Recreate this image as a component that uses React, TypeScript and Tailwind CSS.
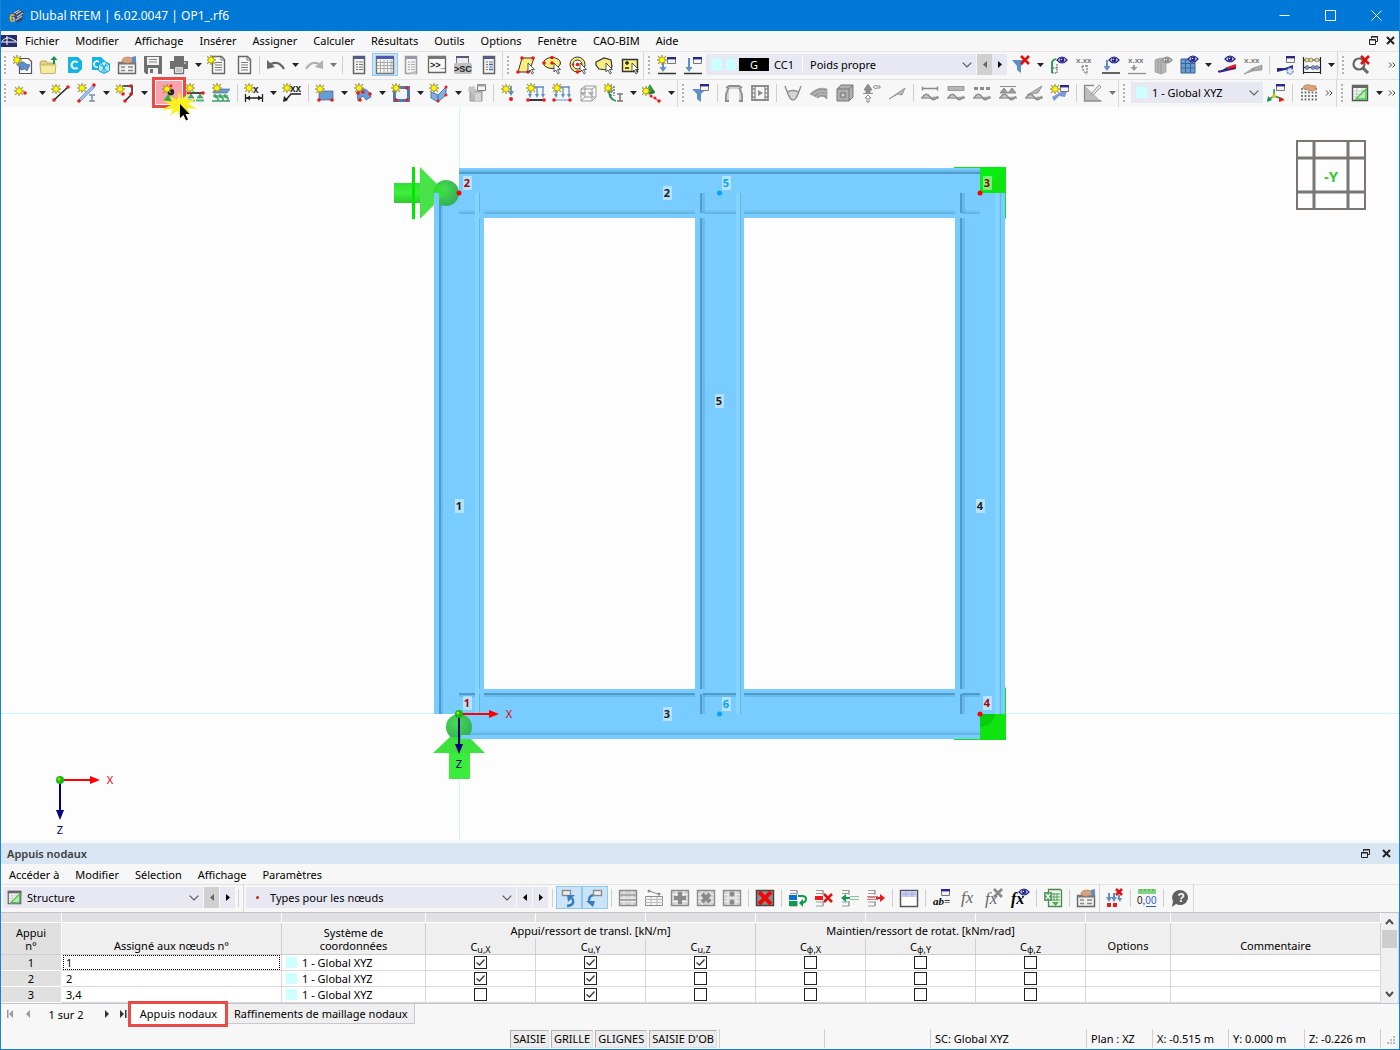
import { type ReactNode } from 'react'

const RED = '#f01818'
const STEEL = '#5f8fca'
const NAVY = '#28288c'
const GRAY = '#8c8c8c'
const DARK = '#555555'

/* ---------- small parts shared by the toolbar icons ---------- */

function Star({ x = 5, y = 5 }: { x?: number; y?: number }) {
    return (
        <g transform={`translate(${x} ${y})`}>
            <path d="M0-5 1-2 4-4 2.2-1 5 0 2.2 1 4 4 1 2 0 5-1 2-4 4-2.2 1-5 0-2.2-1-4-4-1-2z" fill="#f8e800" stroke="#8a8440" strokeWidth=".6" />
            <circle r="2" fill="#fff600" />
        </g>
    )
}

function Dot({ x, y, r = 1.8 }: { x: number; y: number; r?: number }) {
    return <circle cx={x} cy={y} r={r} fill={RED} />
}

function Eye({ x = 14, y = 5, c = NAVY }: { x?: number; y?: number; c?: string }) {
    return (
        <g transform={`translate(${x} ${y})`}>
            <path d="M-5 0Q0-6 5 0 0 6-5 0z" fill="#dfe3f4" stroke={c} strokeWidth="1.2" />
            <circle r="2.4" fill={c} />
            <circle cx="-.6" cy="-.6" r=".7" fill="#fff" />
        </g>
    )
}

function Win({ x = 11, y = 1, c = NAVY }: { x?: number; y?: number; c?: string }) {
    return (
        <g transform={`translate(${x} ${y})`}>
            <path d="M.5.5h8v6h-8z" fill="#f4f4f4" stroke="#777" />
            <path d="M0 0h9v2.4H0z" fill={c} />
        </g>
    )
}

function Mini({ x, y, s = 6, c = DARK, children }: { x: number; y: number; s?: number; c?: string; children: string }) {
    return (
        <text x={x} y={y} fontSize={s} fill={c} fontWeight="700" fontFamily="Liberation Sans, sans-serif">{children}</text>
    )
}

const page = (
    <>
        <path d="M5.5 1.5h9l3 3v14h-12z" fill="#fafafa" stroke="#666" strokeWidth="1.4" />
        <path d="M14 1.500v3.500h3.500M8 7.500h7M8 10h7M8 12.500h7M8 15h7" fill="none" stroke="#777" />
    </>
)

const form = (
    <>
        <path d="M1.500 7.500h17v11h-17z" fill="#f0f0f0" stroke="#666" strokeWidth="1.400" />
        <path d="M1 7h18v2.500H1z" fill="#777" />
        <path d="M4 12h4M4 15.500h4M11 12h5M11 15.500h5" stroke="#888" strokeWidth="1.400" />
        <path d="M5 6c0-3 3-4 6-4l6 1v4l-5 1c-3 .5-6 0-7-2z" fill="#d9a27c" stroke="#a87858" strokeWidth=".6" />
        <path d="M15 2l4-1v6l-4 1z" fill={STEEL} />
    </>
)

const funnel = <path d="M1 5h14l-5 6v7l-4-3v-4z" fill={STEEL} />

const panel = (
    <>
        <path d="M4.500 1.500h11v17h-11z" fill="#f4f4f4" stroke="#666" strokeWidth="1.500" />
        <path d="M4 1h12v3H4z" fill="#555a80" />
        <path d="M7 7h2M7 9.500h2M7 12h2M7 14.500h2M10 7h4M10 9.500h4M10 12h4M10 14.500h4" stroke="#777" />
    </>
)

const frameLoad = (c: string, a: string) => (
    <>
        <path d="M3 4h15M4 4v9M11 4v9M17 4v9" stroke={a} strokeWidth="1.300" />
        <path d="M2 11h4l-2 4zM9 11h4l-2 4zM15 11h4l-2 4z" fill={a} />
        <path d="M2 17h16" stroke={c} strokeWidth="1.800" />
    </>
)

const wave = (
    <>
        <path d="M2 15q4-7 8-1t8-1" fill="#c8c8c8" stroke={GRAY} strokeWidth="1.500" />
        <path d="M1 15h18" stroke={GRAY} strokeWidth="1.300" />
    </>
)

const cells = (inner: ReactNode) => (
    <>
        <path d="M1.500 2.500h17v15h-17z" fill="#d2d2d2" stroke={GRAY} strokeWidth="1.400" />
        <path d="M2 6.500h16M2 10h16M2 13.500h16M6 3v14M14 3v14" stroke="#efefef" />
        {inner}
    </>
)

const rows = (
    <path d="M2 2.500h7v3H2M2 9.500h7M2 14h7v4H2M9 2v5M9 13v5" fill="none" stroke="#999" />
)

const redX = (x: number, y: number, s = 4, c = '#e01010') => (
    <path d={`M${x - s} ${y - s}l${2 * s} ${2 * s}m0-${2 * s}l-${2 * s} ${2 * s}`} stroke={c} strokeWidth="2.600" />
)

const pointer = <path d="M12 8v9l2-2 2 4 1.500-1-2-3.500h3z" fill="#fff" stroke="#333" strokeWidth=".8" />

const icons: Record<string, ReactNode> = {
    'new model': <><path d="M6.500 3.500h9l3 3v12h-12z" fill="#fff" stroke="#555" strokeWidth="1.200" /><path d="M4 10q5-6 9-1l4 1-3 6-2-2-4 1-1-3z" fill={STEEL} stroke="#365f94" strokeWidth=".7" /><Star x={4} y={5} /></>,
    'open': <><path d="M1 8l1-2h5l1 2h8v10H2z" fill="#e3d27a" stroke="#a89440" strokeWidth=".7" /><path d="M1 10h16l-1 8.500H2z" fill="#f5ec9f" stroke="#b5a452" strokeWidth=".7" /><path d="M14 9V5h-2.500L15 1l3.500 4H16v4z" fill="#18944a" /></>,
    'cloud center': <><path d="M3 2h10l4 4v8l-4 4H3z" fill="#12b5e6" /><path d="M12.500 7.500a3.500 3.500 0 1 0 0 5" fill="none" stroke="#fff" strokeWidth="2" /></>,
    'cloud network': <><path d="M1 2h9l4 4v9H1z" fill="#12b5e6" /><path d="M8 7a3 3 0 1 0-1 5" fill="none" stroke="#fff" strokeWidth="1.500" /><path d="M13 6l5.500 3v6.500L13 18.500l-5.500-3V9z" fill="#b5ebfa" stroke="#12a5d6" /><path d="M7.500 9l5.500 3 5.500-3M13 12v6.500M10 7.500l6 10M16 7.500l-6 10" fill="none" stroke="#12a5d6" strokeWidth=".9" /></>,
    'model data': form,
    'save': <><path d="M1 1h18v18H3l-2-2z" fill="#707070" /><path d="M4 2h12v8H4zM5 13h10v6H5z" fill="#f2f2f2" /><path d="M6 4.500h8M6 7h8" stroke="#888" /><path d="M7 14h3v4H7z" fill="#707070" /></>,
    'print': <><path d="M5 1h10v5H5zM1 6h18v8H1z" fill="#707070" /><path d="M5.500 11.500h9v7h-9z" fill="#fff" stroke="#707070" strokeWidth="1.400" /><path d="M7 14h6M7 16h6" stroke="#888" /><path d="M15 8h2" stroke="#fff" /></>,
    'new report': <>{page}<Star x={4} y={5} /></>,
    'report': page,
    'undo': <><path d="M5 9q8-4 13 5" fill="none" stroke="#666" strokeWidth="2.200" /><path d="M1 5v9l8-2z" fill="#666" /></>,
    'redo': <><path d="M15 9Q7 5 2 14" fill="none" stroke="#b0b0b0" strokeWidth="2.200" /><path d="M19 5v9l-8-2z" fill="#b0b0b0" /></>,
    'navigator': panel,
    'tables': <><path d="M1.500 1.500h17v17h-17z" fill="#f8f8f8" stroke="#777" strokeWidth="1.400" /><path d="M1 1h18v3H1z" fill="#4a5ab0" /><path d="M2 7.500h16M2 10.500h16M2 13.500h16M5.500 5v13M9 5v13M12.500 5v13M16 5v13" stroke="#aaa" /></>,
    'scripts': <g opacity=".6">{panel}<path d="M9 17l6-1v3H9z" fill="#999" /></g>,
    'console': <><path d="M1.500 1.500h17v16h-17z" fill="#f8f8f8" stroke="#666" strokeWidth="1.300" /><path d="M1 1h18v3H1z" fill="#777" /><Mini x={3} y={13} s={9} c="#222">{'>>_'}</Mini></>,
    'script manager': <><path d="M3.500 1.500h12v8h-12z" fill="#eee" stroke="#777" /><path d="M3 1h13v2H3z" fill="#555a80" /><rect x="1" y="8" width="18" height="11" rx="2" fill="#c0c0c0" /><Mini x={1} y={17} s={9} c="#222">{'>SC'}</Mini></>,
    'plausibility': <>{panel}<path d="M10 9.500h4M10 14.500h4" stroke="#3a66c8" strokeWidth="1.400" /></>,
    'select rhombus': <><path d="M6 3h12l-5 14H2z" fill="#f8ee80" stroke="#333" /><Dot x={6} y={3} /><Dot x={17} y={3} /><Dot x={2} y={17} /><Dot x={12} y={17} />{pointer}</>,
    'select ellipse': <><ellipse cx="10" cy="8" rx="8.500" ry="5.500" fill="#f8ee80" stroke="#333" /><Dot x={10} y={8} /><Dot x={10} y={2.5} /><Dot x={2} y={8} />{pointer}</>,
    'select ring': <><circle cx="9.500" cy="9.500" r="7.500" fill="#f8ee80" stroke="#333" /><circle cx="9.500" cy="9.500" r="4.500" fill="#fff" stroke="#333" /><Dot x={9.5} y={9.5} /><Dot x={9.500} y={17} /><Dot x={5} y={9.500} r={1.300} />{pointer}</>,
    'select polygon': <><path d="M2 7l8-4 7 2 1 7-5 3-8-1-3-4z" fill="#f8ee80" stroke="#333" strokeWidth="1.200" />{pointer}</>,
    'select plus minus': <><path d="M2.500 4.500h15v12h-15z" fill="#f8ee80" stroke="#333" strokeWidth="1.400" /><path d="M5 8h4M7 6v4M5 13h4" stroke="#222" strokeWidth="1.500" />{pointer}</>,
    'new load case': <><Win x={10} y={2} /><path d="M6 5v9" stroke={STEEL} strokeWidth="2" /><path d="M2.500 12h7L6 17z" fill={STEEL} /><path d="M1 18.500h18" stroke="#333" strokeWidth="1.500" /><Star x={5} y={5} /></>,
    'load cases': <><Win x={10} y={2} /><path d="M6 3v11" stroke={STEEL} strokeWidth="2" /><path d="M2.500 12h7L6 17z" fill={STEEL} /><path d="M1 18.500h18" stroke="#333" strokeWidth="1.500" /></>,
    'filter off': <>{funnel}{redX(14, 5, 4)}</>,
    'deformation': <><path d="M3 18V8q0-3 4-4" fill="none" stroke="#18944a" strokeWidth="1.800" /><path d="M8 18V8M3 18h5M4 13h4" fill="none" stroke="#444" strokeDasharray="1.500 1" /><Eye x={13} /></>,
    'deformation values': <><Mini x={1} y={8} s={8} c="#777">x.xx</Mini><path d="M7 11q1 6 5 8M12 10v9M7 11h5" fill="none" stroke={GRAY} strokeWidth="1.500" strokeDasharray="2 1" /></>,
    'load view': <><path d="M6 5v9" stroke={STEEL} strokeWidth="2" /><path d="M2.500 11h7L6 16z" fill={STEEL} /><path d="M1 18h18" stroke="#333" strokeWidth="1.500" /><Eye x={13} /></>,
    'load values': <><Mini x={1} y={8} s={8} c="#777">x.xx</Mini><path d="M7 10v4" stroke="#999" strokeWidth="2" /><path d="M3.500 12h7L7 16z" fill="#999" /><path d="M1 18.500h18" stroke={GRAY} strokeWidth="1.300" /></>,
    'solid view': <><path d="M2 5l5-2 6 1v13l-5 2-6-2z" fill="#b5b5b5" stroke="#9a9a9a" strokeWidth=".7" /><path d="M8 6v13M5 4.500v13" stroke="#999" /><Eye x={14} c="#8a8a8a" /></>,
    'mesh view': <><path d="M2 4h14v14H2z" fill="#6a9bd2" stroke="#3a6396" /><path d="M2 8.500h14M2 13h14M6.500 4v14M11.500 4v14" stroke="#3a6396" /><Eye x={14} y={4} /></>,
    'result view': <><path d="M1 18l9-6v4z" fill={NAVY} /><path d="M10 12l9-3v5l-9 2z" fill={RED} /><path d="M1 16.500L19 13" stroke={NAVY} strokeWidth="1.500" /><Eye x={13} y={4} /></>,
    'result values': <><Mini x={1} y={8} s={8} c="#777">x.xx</Mini><path d="M1 19l9-6v3zM10 13l9-3v5l-9 1z" fill="#aaa" stroke={GRAY} strokeWidth=".6" /></>,
    'result table': <><path d="M1 13h8l8-3v4l-8 1-8 2z" fill={NAVY} /><Win x={10} y={1} /><circle cx="14" cy="16" r="3" fill="#dfe8fa" stroke="#6a8bd8" strokeWidth="1.500" strokeDasharray="2 1" /></>,
    'abacus': <><path d="M1.500 2v17M18.500 2v17M1 5h18M1 12.500h18M1 17.500h18" stroke="#222" strokeWidth="1.200" /><circle cx="5" cy="5" r="2" fill="#eee28a" stroke="#555" strokeWidth=".6" /><circle cx="9" cy="5" r="2" fill="#eee28a" stroke="#555" strokeWidth=".6" /><circle cx="15" cy="5" r="2" fill="#eee28a" stroke="#555" strokeWidth=".6" /><circle cx="5" cy="12.500" r="2" fill="#7a96dc" stroke="#555" strokeWidth=".6" /><circle cx="11" cy="12.500" r="2" fill="#7a96dc" stroke="#555" strokeWidth=".6" /><circle cx="15" cy="12.500" r="2" fill="#7a96dc" stroke="#555" strokeWidth=".6" /></>,
    'cancel zoom': <><circle cx="8" cy="9" r="5.500" fill="none" stroke="#666" strokeWidth="2.200" /><path d="M12 13l5 5" stroke="#666" strokeWidth="3" />{redX(14, 5, 4)}</>,

    'node': <><Star x={6} y={8} /><Dot x={12} y={10} /></>,
    'line': <><path d="M3 17L17 4" stroke="#222" strokeWidth="1.500" /><Star x={5} y={6} /><Dot x={3} y={17} /><Dot x={17} y={4} /></>,
    'member': <><path d="M2 16L16 2l2 2L4 18z" fill="#9cc0ea" stroke="#5f8fca" strokeWidth=".7" /><Star x={5} y={5} /><Dot x={2} y={18} /><Dot x={17} y={2} /><path d="M12 12h6M12 18h6M15 12v6" stroke="#7a8db0" strokeWidth="1.500" /></>,
    'polyline': <><path d="M7 3h10v8l-7 7" fill="none" stroke="#222" strokeWidth="1.500" /><Dot x={16} y={3} /><Dot x={16} y={11} /><Dot x={10} y={18} /><Dot x={8} y={11} /><Star x={5} y={6} /></>,
    'nodal support': <><path d="M10 10l7 8H4z" fill="#3aa650" /><circle cx="12" cy="9" r="3.200" fill="#222" /><Star x={8} y={6} /><Dot x={12} y={3} r={1.400} /></>,
    'line support': <><path d="M2 10h16" stroke="#222" strokeWidth="1.600" /><path d="M6 11l3 4H3zM15 11l3 4h-6z" fill="#4db37c" stroke="#2b7d50" strokeWidth=".6" /><path d="M2 17.500h8M11 17.500h8" stroke="#4db37c" strokeWidth="2" /><Star x={5} y={5} /><Dot x={3} y={10} r={1.500} /><Dot x={18} y={10} /></>,
    'surface support': <><path d="M2 9l4-3h13l-3 4H2z" fill="#6a9bd2" stroke="#3a6396" strokeWidth=".6" /><path d="M4 11v3l3 1v3M9 11v3l3 1v3M14 11v3l3 1v3M1 18h18M2 13h15" fill="none" stroke="#35a564" strokeWidth="1.500" /><Star x={6} y={5} /></>,
    'dimension x': <><path d="M1.500 11v8M18.500 11v8M2 15h16" stroke="#222" strokeWidth="1.300" /><path d="M2 15l4-2.500v5zM18 15l-4-2.500v5z" fill="#222" /><Mini x={9} y={10} s={10} c="#222">x</Mini><Star x={5} y={5} /></>,
    'dimension xx': <><path d="M3 18l6-7h10" fill="none" stroke="#222" strokeWidth="1.400" /><path d="M1 19l1-6 4 4z" fill="#222" /><Mini x={8} y={9} s={10} c="#222">xx</Mini><Star x={5} y={5} /></>,
    'surface': <><path d="M4 8h14v9H4z" fill="#6a9bd2" stroke="#3a6396" strokeWidth=".7" /><Star x={5} y={6} /><Dot x={4} y={17} /><Dot x={17} y={17} /></>,
    'quadrangle': <><path d="M4 9q6-7 12 0l2 5-5 3-3-4-5 5z" fill="#6a9bd2" stroke="#3a6396" strokeWidth=".7" /><Star x={6} y={5} /><Dot x={5} y={10} /><Dot x={10} y={9} /><Dot x={17} y={11} /><Dot x={7} y={17} /></>,
    'opening': <><path d="M3.500 4.500h14v13h-14z" fill="#f2f6fc" stroke="#4a7cba" strokeWidth="3" /><Star x={5} y={5} /><Dot x={16} y={5} r={1.700} /><Dot x={5} y={17} r={1.700} /><Dot x={16} y={17} r={1.700} /></>,
    'solid': <><path d="M2 9l7 3 8-8v8l-8 7-7-4z" fill="#7fb0e4" stroke="#3a6396" strokeWidth=".8" /><path d="M9 12v7" stroke="#3a6396" /><Star x={5} y={5} /><Dot x={17} y={4} r={1.500} /><Dot x={9} y={18} r={1.500} /><Dot x={17} y={12} r={1.500} /></>,
    'block': <><path d="M3 8h12v10H3z" fill="#b9b9b9" stroke="#999" /><path d="M8 10h6v8H8z" fill="#d5d5d5" /><Win x={10} y={1} c="#999" /><path d="M2 3l3 1 2-2 1 4 3 1-4 2-1 3-2-3-3-1z" fill="#c5c5c5" /></>,
    'nodal load': <><path d="M11 3v6" stroke={STEEL} strokeWidth="1.800" /><path d="M8 8h6l-3 5z" fill={STEEL} /><Dot x={11} y={16} r={2} /><Star x={6} y={6} /></>,
    'line load': <>{frameLoad('#222', STEEL)}<Star x={5} y={5} /><Dot x={2} y={17} /><Dot x={18} y={17} /></>,
    'member load': <>{frameLoad('#9cc0ea', STEEL)}<Star x={5} y={5} /><Dot x={2} y={17} /><Dot x={18} y={17} /></>,
    'solid load': <g opacity=".8"><path d="M3 6l4-3h11v11l-4 4H3zM3 6h11v12M14 6l4-3M7 3v11h11M3 18l4-4" fill="none" stroke="#888" /><path d="M2 9l3 4 3-4zM10 9l3 4 3-4z" fill="#999" /></g>,
    'imposed deformation': <><path d="M5 5q-1 11 7 13" fill="none" stroke="#18944a" strokeWidth="1.800" /><path d="M7 2v13M10 3v10M7 8h3" stroke="#333" strokeDasharray="2 1" /><Star x={4} y={5} /><path d="M13 11h6M13 18h6M16 11v7" stroke="#777" strokeWidth="1.500" /></>,
    'imperfection': <><path d="M8 1l5 8H3z" fill="#2f9a50" /><ellipse cx="8" cy="9" rx="5" ry="2" fill="#1e7d3c" /><Dot x={9} y={13} r={1.500} /><Dot x={13} y={15} r={1.500} /><Dot x={17} y={18} /><path d="M9 13l8 5" stroke={RED} strokeDasharray="2 1" /><Star x={4} y={8} /></>,

    'object filter': <><path d="M1 6h14l-5 5v8l-4-3v-5z" fill={STEEL} /><Win x={9} y={1} /></>,
    'frame deformed': <><path d="M4 5h12M4 18V5M16 18V5" stroke="#aaa" /><path d="M2 5l3-2h10l3 2M2 18q-1-8 3-13M18 18q1-8-3-13M1 18h4M15 18h4" fill="none" stroke={GRAY} strokeWidth="1.800" /></>,
    'animation': <><path d="M2 3h16v14H2z" fill="none" stroke={GRAY} strokeWidth="1.800" /><path d="M5 3v14M15 3v14M2 6h3M2 10h3M2 14h3M15 6h3M15 10h3M15 14h3" stroke={GRAY} strokeWidth="1.300" /><path d="M8 7l5 3-5 3z" fill={GRAY} /></>,
    'moment': <><path d="M4 9q6-3 12 0-2 8-6 8T4 9z" fill="#d5d5d5" /><path d="M2 3l3 8q5 12 10 0l3-8M4 9q6-3 12 0" fill="none" stroke={GRAY} strokeWidth="1.400" /></>,
    'surface results': <><path d="M1 11q8-8 17-5v10q-5-5-9-1z" fill="#9b9b9b" stroke="#8b8b8b" strokeWidth=".6" /><path d="M4 12q7-6 14-3M7 14q5-5 11-2" fill="none" stroke="#c5c5c5" /></>,
    'solid results': <><path d="M2 6l4-4h12v12l-4 4H2z" fill="#b0b0b0" stroke="#777" /><path d="M2 6h12v12M14 6l4-4" fill="none" stroke="#777" /><circle cx="8" cy="12" r="3.500" fill="#8a8a8a" /><circle cx="8" cy="12" r="1.500" fill="#d5d5d5" /></>,
    'reactions': <><path d="M7 1l4 6H3zM5 7h4v3H5zM2 10.500h10" fill={GRAY} stroke={GRAY} /><path d="M7 12l3 3H8v4H6v-4H4zM12 4l3-2v1h4v2h-4v1z" fill="#fff" stroke={GRAY} /></>,
    'section results': <path d="M2 16l16-11-3 7-4-1z" fill="#b5b5b5" stroke={GRAY} strokeWidth=".8" />,
    'result wave 1': <><path d="M2 5.500h16M2.500 3.500v4M17.500 3.500v4" stroke={GRAY} strokeWidth="1.500" />{wave}</>,
    'result wave 2': <><path d="M2 3.500h16v4H2z" fill="#b5b5b5" stroke={GRAY} strokeWidth=".8" />{wave}</>,
    'result wave 3': <><path d="M2 5.500h16" stroke={GRAY} strokeWidth="3" strokeDasharray="4 2" />{wave}</>,
    'result wave 4': <><path d="M2 3.500h16M6 5l4 5H2zM14 5l4 5h-8z" fill="#999" stroke={GRAY} />{wave}</>,
    'result wave 5': <><path d="M3 12l15-9-4 7z" fill="#b5b5b5" stroke={GRAY} strokeWidth=".8" />{wave}</>,
    'new section': <><path d="M2 14l16-9-3 9-6-1-5 5z" fill="#7a96dc" /><Win x={10} y={2} /><Star x={5} y={6} /></>,
    'visibility': <><path d="M1 2l17 16H1z" fill="#bdbdbd" /><path d="M1.500 2v16h17M1 2.500h10" fill="none" stroke={GRAY} strokeWidth="1.300" /><path d="M8 11l8-9 2 2-8 8z" fill="#e5e5e5" stroke="#999" /></>,
    'coordinate system': <><Win x={10} y={1} /><path d="M8 13V6M8 13l-6 4M8 13l9 3" fill="none" stroke="#18944a" strokeWidth="1.500" /><path d="M19 17l-6 2v-5z" fill={RED} /><path d="M1 19l1-6 4 4z" fill="#18944a" /><circle cx="8" cy="13" r="2" fill="#e8c020" /></>,
    'grid hand': <><path d="M3 5v14M6.500 5v14M10 5v14M13.500 5v14M17 5v14" stroke="#666" strokeDasharray="2 1.500" strokeWidth="1.600" /><path d="M4 5c0-3 4-4 7-3l6 1v4l-6 1z" fill="#d9a27c" stroke="#a87858" strokeWidth=".6" /></>,
    'table design': <><path d="M2.500 2.500h15v15h-15z" fill="#f4faf4" stroke="#555" strokeWidth="1.400" /><path d="M2 2h16v3H2z" fill="#666" /><path d="M3 8h14M3 11h14M3 14h14M7 5v12M12 5v12" stroke="#c5c5c5" /><path d="M16 6v10H6z" fill="#b5efb5" stroke="#4fc04f" strokeWidth="1.400" /></>,

    'sync left': <><path d="M3.500 2.500h8v5h-8z" fill="#f0f0f0" stroke={GRAY} strokeWidth="1.400" /><path d="M8 18q9-1 5-8" fill="none" stroke="#3a7cc4" strokeWidth="2.400" /><path d="M8 7h8l-7 7z" fill="#3a7cc4" /></>,
    'sync right': <><path d="M8.500 2.500h8v5h-8z" fill="#f0f0f0" stroke={GRAY} strokeWidth="1.400" /><path d="M8 7q-6 2-3 8" fill="none" stroke="#3a7cc4" strokeWidth="2.400" /><path d="M1 13h9l-2 6z" fill="#3a7cc4" /></>,
    'rows': cells(<path d="M2 7h16M2 12h16" stroke="#999" strokeWidth="1.500" />),
    'column chart': <><path d="M1.500 8.500h17v9h-17z" fill="#f5f5f5" stroke={GRAY} /><path d="M1 11.500h18M1 14.500h18M7 9v8M13 9v8" stroke="#bbb" /><path d="M5 3l9 3" stroke={GRAY} /><circle cx="5" cy="3" r="1.500" fill={GRAY} /><circle cx="15" cy="6" r="1.500" fill={GRAY} /></>,
    'add': cells(<path d="M10 4v12M4 10h12" stroke="#8a8a8a" strokeWidth="4" />),
    'remove': cells(<path d="M6 6l8 8M14 6l-8 8" stroke="#8a8a8a" strokeWidth="4" />),
    'split': cells(<><circle cx="10" cy="6" r="2.500" fill="#8a8a8a" /><circle cx="10" cy="14" r="2.500" fill="#8a8a8a" /></>),
    'delete all': <><path d="M1.500 2.500h17v15h-17z" fill="#8c8c8c" stroke="#444" strokeWidth="1.500" /><path d="M4 4l12 12M16 4L4 16" stroke="#f00808" strokeWidth="4" /></>,
    'copy row': <>{rows}<path d="M1 7h8v5H1z" fill="#0a70c8" /><path d="M1 13h8v5H1z" fill="#109a50" /><path d="M10 8h4q4 0 4 3t-4 4h-1" fill="none" stroke="#109a50" strokeWidth="2" /><path d="M11 15l4-4v8z" fill="#109a50" /></>,
    'delete row': <>{rows}<path d="M1 8h8v4H1z" fill={RED} />{redX(14, 10, 4)}</>,
    'insert row': <>{rows}<path d="M1 10l5-4v3h4v2H6v3z" fill="#109a50" /><path d="M10 8.500h9M10 11.500h9" stroke="#77c89a" strokeWidth="1.200" /></>,
    'remove row': <>{rows}<path d="M1 8.500h11M1 11.500h11" stroke="#f07070" strokeWidth="1.200" /><path d="M19 10l-5-4v3h-4v2h4v3z" fill={RED} /></>,
    'header': <><path d="M1.500 2.500h17v16h-17z" fill="#fff" stroke="#555" strokeWidth="1.500" /><path d="M2 3h16v6H2z" fill="#ccccf4" /><path d="M2 6h16M7 3v6M13 3v6" stroke="#aaaae0" /></>,
    'parameter': <><Win x={9} y={1} /><text x="1" y="17" fontSize="11" fontWeight="700" fontStyle="italic" fontFamily="Liberation Serif, serif">ab=</text></>,
    'formula': <text x="3" y="15" fontSize="17" fontStyle="italic" fill="#666" fontFamily="Liberation Serif, serif">fx</text>,
    'formula off': <><text x="1" y="16" fontSize="17" fontStyle="italic" fill="#666" fontFamily="Liberation Serif, serif">fx</text>{redX(14, 5, 4, '#888')}</>,
    'formula view': <><text x="1" y="16" fontSize="16" fontWeight="700" fontStyle="italic" fontFamily="Liberation Serif, serif">fx</text><Eye x={14} y={4} /></>,
    'excel': <><path d="M5.500 1.500h12l1 1v16h-13z" fill="#e8f3e8" stroke="#4a8a50" strokeWidth="1.300" /><path d="M9 6h8M9 9h8M9 12h8M11 5v8M14 5v8" stroke="#5aa060" /><path d="M1 4h8v9H1z" fill="#5aa060" /><path d="M3 6l4 5M7 6l-4 5" stroke="#fff" strokeWidth="1.300" /><path d="M9 14h7l-3.500 4z" fill="#4caa50" /></>,
    'settings form': form,
    'delete loads': <><path d="M5 5v6M10 5v6M15 7v5" stroke={STEEL} strokeWidth="2" /><path d="M2 9h6l-3 5zM7 9h6l-3 5zM13 10h5l-2 4z" fill={STEEL} /><path d="M3 15h4v4H3zM9 15h4v4H9z" fill={RED} />{redX(15, 4, 3)}</>,
    'decimals': <><path d="M1 1h18v5H1z" fill="#80d680" /><path d="M4 1v2M8 1v2M12 1v2M16 1v2" stroke="#3a9a40" /><text x="0" y="16" fontSize="10" fill="#111" fontFamily="Liberation Sans, sans-serif">0,<tspan fill="#2a5ad8">00</tspan></text><path d="M9 18.500h10" stroke="#2a5ad8" /></>,
    'help': <><path d="M10 2a8 7.500 0 1 1-4 14l-4 3 1-6A8 7.500 0 0 1 10 2z" fill="#606060" /><text x="7.500" y="14" fontSize="12" fontWeight="700" fill="#fff" fontFamily="Liberation Sans, sans-serif">?</text></>,
}

/* ---------- toolbar building blocks ---------- */

function Separator() {
    return <div className="flex w-[7px] shrink-0 justify-center"><div className="h-[18px] w-px bg-[#cfcfcf]" /></div>
}

function Grip() {
    return (
        <div className="flex h-7 w-[11px] shrink-0 items-center border-l border-[#d8d8d8] pl-1">
            <div className="h-[18px] border-l-2 border-dotted border-[#b4b4b4]" />
        </div>
    )
}

function Caret({ muted = false }: { muted?: boolean }) {
    return (
        <button aria-label="menu" className="flex h-6 w-3 shrink-0 items-center justify-center">
            <svg width="7" height="4" viewBox="0 0 7 4"><path d="M0 0h7L3.500 4z" fill={muted ? '#777' : '#222'} /></svg>
        </button>
    )
}

const pressed = ['tables', 'sync left', 'sync right']

// "-" separator, "|" group grip, "v" / "w" drop-down arrow, anything else is an icon
function Tools({ items }: { items: string[] }) {
    return (
        <>
            {items.map((item, i) => {
                if (item === '-') return <Separator key={i} />
                if (item === '|') return <Grip key={i} />
                if (item === 'v') return <Caret key={i} />
                if (item === 'w') return <Caret key={i} muted />
                return (
                    <button
                        key={i}
                        aria-label={item}
                        className={pressed.includes(item)
                            ? 'flex h-[23px] w-[26px] shrink-0 items-center justify-center border border-[#90c8f6] bg-[#cce4f7]'
                            : 'flex h-[23px] w-[26px] shrink-0 items-center justify-center'}
                    >
                        <svg className="size-5" viewBox="0 0 20 20">{icons[item]}</svg>
                    </button>
                )
            })}
        </>
    )
}

function Step({ dir, off = false }: { dir: 'left' | 'right'; off?: boolean }) {
    return (
        <button
            aria-label={dir}
            className={off
                ? 'flex h-[21px] w-[15px] shrink-0 items-center justify-center bg-[#d0d0d0]'
                : 'flex h-[21px] w-[15px] shrink-0 items-center justify-center bg-[#e8e8f3]'}
        >
            <svg width="4" height="7" viewBox="0 0 4 7">
                <path d={dir === 'left' ? 'M4 0v7L0 3.500z' : 'M0 0v7l4-3.500z'} fill={off ? '#666' : '#000'} />
            </svg>
        </button>
    )
}

function Choice({ label, value }: { label: string; value: string }) {
    return (
        <>
            <select aria-label={label} className="h-full min-w-0 flex-1 appearance-none outline-none">
                <option>{value}</option>
            </select>
            <svg className="mr-1 shrink-0" width="10" height="6" viewBox="0 0 10 6"><path d="M.7.7L5 5 9.300.7" fill="none" stroke="#555" strokeWidth="1.100" /></svg>
        </>
    )
}

function More() {
    return (
        <button aria-label="more" className="flex h-5 w-3.5 shrink-0 items-center justify-center">
            <svg width="8" height="6" viewBox="0 0 8 6"><path d="M1 .5L3.500 3 1 5.500M4.500.5L7 3 4.500 5.500" fill="none" stroke="#444" /></svg>
        </button>
    )
}

function Restore() {
    return <svg width="9" height="9" viewBox="0 0 9 9"><path d="M2.500 2.500v-2h6v5h-2M2.500 1h6M.5 3.500h6v5h-6zM.5 4h6" fill="none" stroke="#222" /></svg>
}

function Cross() {
    return <svg width="9" height="9" viewBox="0 0 9 9"><path d="M1 1l7 7M8 1L1 8" stroke="#222" strokeWidth="2" /></svg>
}

/* ---------- model view ---------- */

const SHADE = '#4f9ccb'
const LIGHT = '#83d4ff'
const LINE = '#65b6e6'

// fold line: a dark core with a soft edge on one side
function Fold({ d, dx = 0, dy = 0, color = SHADE }: { d: string; dx?: number; dy?: number; color?: string }) {
    return (
        <>
            <path d={d} transform={`translate(${dx} ${dy})`} stroke={color} strokeWidth="4" strokeOpacity=".35" />
            <path d={d} stroke={color} strokeWidth="2" />
        </>
    )
}

function Tag({ x, y, color, children }: { x: number; y: number; color: string; children: string }) {
    return (
        <g>
            <rect x={x - 4} y={y - 7} width="9" height="14" fill="#fff" fillOpacity=".45" />
            <text x={x} y={y + 4} textAnchor="middle" fontSize="11" fontWeight="700" fill={color}>{children}</text>
        </g>
    )
}

function Axes({ x, y }: { x: number; y: number }) {
    return (
        <g transform={`translate(${x} ${y})`}>
            <path d="M0 0h32" stroke="#f00" strokeWidth="2" />
            <path d="M30-4v8l10-4z" fill="#f00" />
            <path d="M0 0v32" stroke="#000080" strokeWidth="2" />
            <path d="M-4 30h8L0 40z" fill="#000080" />
            <circle r="4" fill="#16b816" />
            <circle cx="-1" cy="-1" r="1.500" fill="#b8d800" />
            <text x="50" y="4" textAnchor="middle" fontSize="11" fill="#e00000">X</text>
            <text x="0" y="54" textAnchor="middle" fontSize="11" fill="#000080">Z</text>
        </g>
    )
}

function ModelView() {
    return (
        <svg className="block h-full w-full" viewBox="1 107 1398 733" fontFamily="Noto Sans, sans-serif">
            <defs>
                <linearGradient id="green" x1="0" y1="0" x2="0" y2="1">
                    <stop offset="0" stopColor="#35dc35" />
                    <stop offset=".5" stopColor="#3cf03c" />
                    <stop offset="1" stopColor="#2fc92f" />
                </linearGradient>
                <radialGradient id="ball" cx=".4" cy=".35" r=".7">
                    <stop offset="0" stopColor="#48dc50" />
                    <stop offset="1" stopColor="#2fae55" />
                </radialGradient>
            </defs>
            <path d="M459.500 107v61M459.500 779v61M1 713.500h433M1006 713.500h393" stroke="#c8fafa" />

            {/* supports hidden behind the right-hand corners */}
            <path d="M954 167.500h51.500v51M954 739.500h51.500v-52" fill="none" stroke="#10e010" />
            <path d="M954 217h2v2h-2zM954 688h2v2h-2z" fill="#10e010" />
            <rect x="980" y="167" width="26" height="26" fill="#10e410" />
            <rect x="980" y="714" width="26" height="26" fill="#10e410" />
            <path d="M980 193v-26h26z" fill="#08ee10" />
            <path d="M980 714h15q-2 12-15 13z" fill="#06cf0c" />

            {/* beams and columns */}
            <path d="M459 168h521v25h25v521h-25v25H459v-25h-25V193h25z" fill="#78ccff" />
            <path d="M484 218h211v471H484zM744 218h211v471H744z" fill="#fdfdfd" />
            <Fold d="M459 173h521" dy={-1} />
            <Fold d="M484 213h211M744 213h211M459 213h20M703 213h37M962 213h18" dy={-1} color={LINE} />
            <Fold d="M484 694h211M744 694h211M459 694h20M703 694h37M962 694h18" dy={1} />
            <Fold d="M459 734h521" dy={-1} color={LINE} />
            <Fold d="M440 193v521" dx={1} />
            <Fold d="M701 193v20M701 218v471M701 694v20M961 193v20M961 218v471M961 694v20" dx={2} />
            <path d="M477 193v521M738 193v521M997 193v521" stroke={LIGHT} strokeWidth="4" />
            <path d="M479.500 193v20M479.500 218v471M479.500 694v20M1000.500 193v521M740.500 193v521" stroke={LINE} />

            {/* support at node 2 */}
            <path d="M394 183h26v20h-26z" fill="url(#green)" />
            <circle cx="446" cy="193" r="13" fill="url(#ball)" />
            <path d="M420 167l26 26-26 26z" fill="#34e034" fillOpacity=".9" />
            <path d="M413.500 167v52" stroke="#00e800" strokeWidth="3" />
            <path d="M434 193h5v26h-5z" fill="#78ccff" />
            <path d="M440 206v13" stroke={SHADE} strokeWidth="2" />

            {/* support at node 1 */}
            <circle cx="459" cy="727" r="13" fill="url(#ball)" />
            <path d="M433 753l17-16h19l16 16z" fill="#34e034" fillOpacity=".95" />
            <path d="M449 753h21v26h-21z" fill="#3cec3c" />
            <path d="M461 735h19v4h-19z" fill="#78ccff" />

            <Axes x={459} y={714} />
            <Axes x={60} y={780} />

            <circle cx="459" cy="193" r="2.500" fill="#f00" />
            <circle cx="980" cy="193" r="2.500" fill="#f00" />
            <circle cx="980" cy="714" r="2.500" fill="#f00" />
            <circle cx="719.500" cy="193" r="2.500" fill="#00a4ff" />
            <circle cx="719.500" cy="714" r="2.500" fill="#00a4ff" />

            <Tag x={467} y={183} color="#b00000">2</Tag>
            <Tag x={987} y={183} color="#900000">3</Tag>
            <Tag x={467} y={703} color="#b00000">1</Tag>
            <Tag x={987} y={703} color="#b00000">4</Tag>
            <Tag x={726} y={183} color="#00a4ff">5</Tag>
            <Tag x={726} y={704} color="#00a4ff">6</Tag>
            <Tag x={667} y={193} color="#222">2</Tag>
            <Tag x={667} y={714} color="#222">3</Tag>
            <Tag x={719} y={401} color="#222">5</Tag>
            <Tag x={459} y={506} color="#222">1</Tag>
            <Tag x={980} y={506} color="#222">4</Tag>

            {/* view cube */}
            <path d="M1297 141h68v68h-68z" fill="none" stroke="#797674" strokeWidth="2" />
            <path d="M1314 140v70M1348 140v70M1296 158h70M1296 192h70" stroke="#797674" strokeWidth="3" />
            <text x="1331" y="182" textAnchor="middle" fontSize="15" fontWeight="700" fill="#35c935">-Y</text>
        </svg>
    )
}

/* ---------- bottom table ---------- */

const supports = [
    { no: 1, nodes: '1', fixed: [true, true, true, false, false, false] },
    { no: 2, nodes: '2', fixed: [true, true, false, false, false, false] },
    { no: 3, nodes: '3,4', fixed: [false, true, false, false, false, false] },
]

const springs = [['u', 'X'], ['u', 'Y'], ['u', 'Z'], ['φ', 'X'], ['φ', 'Y'], ['φ', 'Z']]

function Check({ label, checked }: { label: string; checked: boolean }) {
    return (
        <label className="mx-auto grid size-[13px]">
            <input type="checkbox" aria-label={label} defaultChecked={checked} className="peer col-start-1 row-start-1 size-[13px] appearance-none border border-[#222] bg-white" />
            <svg className="pointer-events-none col-start-1 row-start-1 hidden peer-checked:block" width="13" height="13" viewBox="0 0 13 13">
                <path d="M2.500 6.500L5.500 9l5-5.500" fill="none" stroke="#333" strokeWidth="1.300" />
            </svg>
        </label>
    )
}

const th = 'border-r border-[#cfcfcf] bg-[#efefef] p-0 text-center font-normal'
const td = 'h-4 border-r border-b border-[#d8d8d8] bg-white p-0'

function SupportTable() {
    return (
        <div className="flex border-t border-b border-[#c3c3cd] bg-[#f0f0f0]">
            <table className="min-w-0 flex-1 table-fixed border-separate border-spacing-0 leading-[13px]">
                <colgroup>
                    <col className="w-[61px]" />
                    <col className="w-[220px]" />
                    <col className="w-36" />
                    {springs.map((s) => <col key={s.join()} className="w-[110px]" />)}
                    <col className="w-[85px]" />
                    <col />
                </colgroup>
                <thead>
                    <tr>
                        {Array.from({ length: 11 }, (_, i) => <td key={i} className="h-2.5 border-r border-b border-white bg-[#e0e0e0] p-0" />)}
                    </tr>
                    <tr className="h-4">
                        <th rowSpan={2} className="border-r border-b border-white border-b-[#cfcfcf] bg-[#e0e0e0] p-0 pb-0.5 align-bottom font-normal">Appui<br />n°</th>
                        <th rowSpan={2} className={`${th} border-b pb-0.5 align-bottom`}>Assigné aux nœuds n°</th>
                        <th rowSpan={2} className={`${th} border-b pb-0.5 align-bottom`}>Système de<br />coordonnées</th>
                        <th colSpan={3} className={`${th} pb-0.5`}>Appui/ressort de transl. [kN/m]</th>
                        <th colSpan={3} className={`${th} pb-0.5`}>Maintien/ressort de rotat. [kNm/rad]</th>
                        <th rowSpan={2} className={`${th} border-b pb-0.5 align-bottom`}>Options</th>
                        <th rowSpan={2} className={`${th} border-b pb-0.5 align-bottom`}>Commentaire</th>
                    </tr>
                    <tr className="h-4">
                        {springs.map(([sub, axis]) => (
                            <th key={sub + axis} className={`${th} border-b`}>
                                C<span className="relative top-0.5 text-[9px]">{sub},{axis}</span>
                            </th>
                        ))}
                    </tr>
                </thead>
                <tbody>
                    {supports.map((row) => (
                        <tr key={row.no}>
                            <th className="h-4 border-r border-b border-white bg-[#e0e0e0] p-0 text-center font-normal">{row.no}</th>
                            <td className={td}>
                                <div className={row.no === 1 ? 'mr-px ml-px border border-dotted border-black pl-0.5' : 'pl-1'}>{row.nodes}</div>
                            </td>
                            <td className={td}>
                                <div className="flex items-center gap-[5px] pl-1">
                                    <span className="h-[11px] w-[11px] bg-[#ccffff]" />
                                    1 - Global XYZ
                                </div>
                            </td>
                            {row.fixed.map((on, i) => (
                                <td key={i} className={td}><Check label={`${row.no} C${springs[i].join()}`} checked={on} /></td>
                            ))}
                            <td className={td} />
                            <td className={td} />
                        </tr>
                    ))}
                </tbody>
            </table>
            <div className="flex w-[18px] shrink-0 flex-col items-center border-r border-[#d0d0d8] py-1.5">
                <svg width="9" height="6" viewBox="0 0 9 6"><path d="M1 5l3.500-4L8 5" fill="none" stroke="#505050" strokeWidth="2" /></svg>
                <div className="mt-[5px] h-[18px] w-[15px] bg-[#cdcdcd]" />
                <svg className="mt-auto" width="9" height="6" viewBox="0 0 9 6"><path d="M1 1l3.500 4L8 1" fill="none" stroke="#505050" strokeWidth="2" /></svg>
            </div>
        </div>
    )
}

const menu = ['Fichier', 'Modifier', 'Affichage', 'Insérer', 'Assigner', 'Calculer', 'Résultats', 'Outils', 'Options', 'Fenêtre', 'CAO-BIM', 'Aide']
const panelMenu = ['Accéder à', 'Modifier', 'Sélection', 'Affichage', 'Paramètres']
const pager = ['M3 0v8L-1 4zM-3 0h1.500v8H-3z', 'M3 0v8L-1 4z', 'M-1 0v8l4-4z', 'M-3 0v8l4-4zM2 0h1.500v8H2z']

function PagerButton({ step, off = false }: { step: number; off?: boolean }) {
    return (
        <button aria-label={`page ${step}`} className="flex h-5 w-[17px] shrink-0 items-center justify-center">
            <svg width="8" height="8" viewBox="-4 0 8 8"><path d={pager[step]} fill={off ? '#999' : '#333'} /></svg>
        </button>
    )
}

const fields = [
    ['', 'w-[105px]'],
    ['', 'w-[106px]'],
    ['SC: Global XYZ', 'w-[156px]'],
    ['Plan : XZ', 'w-[66px]'],
    ['X: -0.515 m', 'w-[76px]'],
    ['Y: 0.000 m', 'w-[76px]'],
    ['Z: -0.226 m', 'w-[76px]'],
]

export default function App() {
    return (
        <div className="flex h-screen flex-col overflow-hidden border-x border-b border-[#1883d7] bg-[#f7f7f7] font-['Noto_Sans','Open_Sans',sans-serif] text-[11px] leading-4 text-black">
            <header className="flex h-[31px] shrink-0 items-center bg-[#0078d7] pl-[7px] text-[12px] text-white">
                <svg className="mr-1.5 size-4" viewBox="0 0 16 16">
                    <path d="M5 5l5-4 6 3-2 8-5 3z" fill="#39475c" />
                    <path d="M6 5l5-3M8 6l5-3M9 9l6-4M8 12l6-4" stroke="#b8c8dc" strokeWidth="1.200" />
                    <text x="1" y="14" fontSize="11" fontWeight="700" fill="#f5b51c" fontFamily="Liberation Sans, sans-serif">6</text>
                </svg>
                <h1 className="flex-1">Dlubal RFEM | 6.02.0047 | OP1_.rf6</h1>
                {['M.5 5.500h10', 'M.5.5h10v10H.5z', 'M.5.5l10 10M10.500.5l-10 10'].map((d) => (
                    <button key={d} aria-label="window" className="flex h-full w-[46px] items-center justify-center">
                        <svg width="11" height="11" viewBox="0 0 11 11"><path d={d} fill="none" stroke="#fff" /></svg>
                    </button>
                ))}
            </header>

            <nav className="flex h-5 shrink-0 items-center">
                <svg className="mr-2 shrink-0" width="16" height="12" viewBox="0 0 16 12">
                    <path d="M0 0h16v12H0z" fill="#232c6b" />
                    <path d="M0 7h16M6 1v9M1 6q5-5 10-2l4 2" fill="none" stroke="#fff" />
                </svg>
                <div className="flex flex-1 gap-4">
                    {menu.map((m) => <button key={m}>{m}</button>)}
                </div>
                <button aria-label="restore" className="flex w-[17px] justify-center pb-0.5"><Restore /></button>
                <button aria-label="close" className="flex w-[17px] justify-center pb-0.5"><Cross /></button>
            </nav>

            <div className="flex h-7 shrink-0 items-center overflow-hidden border-t border-[#e2e2e2] pb-0.5">
                <div className="-ml-0.5 flex"><Grip /></div>
                <Tools items={['new model', 'open', 'cloud center', 'cloud network', 'model data', 'save', 'print', 'v', 'new report', 'report', '-', 'undo', 'v', 'redo', 'w', '-', 'navigator', 'tables', 'scripts', 'console', 'script manager', 'plausibility', '|', 'select rhombus', 'select ellipse', 'select ring', 'select polygon', 'select plus minus', '|', 'new load case', 'load cases']} />
                <div className="flex h-[21px] w-[270px] shrink-0 items-center bg-[#e8e8f3] pl-[5px]">
                    <span className="mr-[3px] size-[11px] bg-[#ccffff]" />
                    <span className="mr-[3px] size-[11px] bg-[#ccffff]" />
                    <span className="h-[13px] w-[30px] bg-black text-center leading-[13px] text-white">G</span>
                    <span className="mr-[7px] ml-[5px] border-r border-white pr-2">CC1</span>
                    <Choice label="Cas de charge" value="Poids propre" />
                </div>
                <div className="ml-px flex shrink-0"><Step dir="left" off /><Step dir="right" /></div>
                <div className="ml-px flex items-center">
                    <Tools items={['filter off', 'v', 'deformation', 'deformation values', 'load view', 'load values', 'solid view', 'mesh view', 'v', 'result view', 'result values', '-', 'result table', 'abacus', 'v', '|', 'cancel zoom']} />
                </div>
                <div className="ml-auto flex"><More /></div>
            </div>

            <div className="relative flex h-7 shrink-0 items-center border-t border-[#e2e2e2] pb-0.5">
                <div className="-ml-0.5 flex"><Grip /></div>
                <Tools items={['node', 'v', 'line', 'member', 'v', 'polyline', 'v']} />
                <div className="ml-1.5 flex">
                    <div className="relative flex bg-[#f9a3ad]">
                        <Tools items={['nodal support']} />
                        <div className="pointer-events-none absolute -inset-1 border-3 border-[#e94b47]" />
                        <svg className="pointer-events-none absolute top-2.5 left-1 z-10" width="40" height="30" viewBox="0 0 40 30">
                            <path d="M19 0l2 8 8-5-3 6 11-1-9 5 10 5-10-1 2 7-6-5-3 9-4-8-7 5 3-7-12 1 10-5-9-5 10 2-3-7 8 5z" fill="#f8f020" />
                            <path d="M20 13v14l3.500-3 2.500 5.500 2-1-2.500-5.500h4z" fill="#000" />
                        </svg>
                    </div>
                </div>
                <Tools items={['line support', 'surface support', '-', 'dimension x', 'v', 'dimension xx', '-', 'surface', 'v', 'quadrangle', 'v', 'opening', 'v', 'solid', 'v', 'block', '-', 'nodal load', 'line load', 'member load', 'solid load', 'imposed deformation', 'v', 'imperfection', 'v', '|', 'object filter', '-', 'frame deformed', 'animation', '-', 'moment', 'surface results', 'solid results', 'reactions', 'section results', '-', 'result wave 1', 'result wave 2', 'result wave 3', 'result wave 4', 'result wave 5', 'new section', '-', 'visibility', 'w', '|']} />
                <div className="ml-0.5 flex h-[21px] w-[132px] shrink-0 items-center bg-[#e8e8f3] pl-[5px]">
                    <span className="mr-[5px] size-[11px] bg-[#ccffff]" />
                    <Choice label="Système de coordonnées" value="1 - Global XYZ" />
                </div>
                <Tools items={['coordinate system', '-', 'grid hand']} />
                <More />
                <Tools items={['|', 'table design', 'v']} />
                <div className="ml-auto flex"><More /></div>
            </div>

            <main className="min-h-0 flex-1 bg-[#fdfdfd]"><ModelView /></main>

            <section className="mt-[3px] shrink-0">
                <div className="flex h-[21px] items-center bg-[#d8e5f2] pr-0.5 pl-1.5">
                    <h2 className="flex-1 font-semibold text-[#3c3c3c]">Appuis nodaux</h2>
                    <button aria-label="restore" className="flex w-[21px] justify-center"><Restore /></button>
                    <button aria-label="close" className="flex w-[21px] justify-center"><Cross /></button>
                </div>
                <nav className="flex h-5 items-center gap-4 pt-0.5 pl-2">
                    {panelMenu.map((m) => <button key={m}>{m}</button>)}
                </nav>
                <div className="flex h-7 items-center border-t border-[#e2e2e2] pb-0.5 pl-0.5">
                    <div className="flex h-[21px] w-[200px] shrink-0 items-center bg-[#e8e8f3] pl-1">
                        <svg className="mr-[5px] size-[15px]" viewBox="1 1 18 18">{icons['table design']}</svg>
                        <Choice label="Catégorie" value="Structure" />
                    </div>
                    <div className="ml-px flex gap-px"><Step dir="left" off /><Step dir="right" /></div>
                    <Separator />
                    <div className="ml-px h-7 border-l border-[#d8d8d8]" />
                    <div className="ml-0.5 flex h-[21px] w-[270px] shrink-0 items-center bg-[#e8e8f3] pl-2.5">
                        <span className="mr-[11px] size-[3px] rounded-full bg-[#d02020]" />
                        <Choice label="Types" value="Types pour les nœuds" />
                    </div>
                    <div className="mr-px ml-px flex gap-px"><Step dir="left" /><Step dir="right" /></div>
                    <Separator />
                    <Tools items={['sync left', 'sync right', '-', 'rows', 'column chart', 'add', 'remove', 'split', '-', 'delete all', '-', 'copy row', 'delete row', 'insert row', 'remove row', '-', 'header', '-', 'parameter', 'formula', 'formula off', 'formula view', '-', 'excel', '-', 'settings form']} />
                    <div className="mr-px h-7 border-l border-[#d8d8d8]" />
                    <Tools items={['delete loads', '-', 'decimals', '-', 'help']} />
                    <div className="h-7 border-l border-[#d8d8d8]" />
                </div>

                <SupportTable />

                <div className="flex h-6 items-start">
                    <PagerButton step={0} off />
                    <PagerButton step={1} off />
                    <span className="w-[62px] pt-[3px] text-center">1 sur 2</span>
                    <PagerButton step={2} />
                    <PagerButton step={3} />
                    <button className="relative z-10 -mt-[3px] -ml-[3px] h-[26px] w-[100px] border-3 border-[#e94b47] bg-white pl-px">Appuis nodaux</button>
                    <button className="h-5 border-r border-b border-[#c8c8d0] bg-[#efefef] px-1.5">Raffinements de maillage nodaux</button>
                </div>
            </section>

            <footer className="flex h-[21px] shrink-0 items-center justify-end gap-0.5 whitespace-nowrap">
                {['SAISIE', 'GRILLE', 'GLIGNES', "SAISIE D'OB"].map((s) => (
                    <button key={s} className="h-[18px] border border-[#e0e0e0] border-t-[#b0b0b0] border-l-[#b0b0b0] bg-[#ececec] px-0.5">{s}</button>
                ))}
                <div className="flex h-[19px] items-center">
                    {fields.map(([text, width], i) => (
                        <div key={i} className={`${width} h-full border-l border-[#d0d0d0] pl-1 leading-[19px]`}>{text}</div>
                    ))}
                    <div className="flex h-full w-[19px] items-end justify-end border-l border-[#d0d0d0] p-1">
                        <svg width="8" height="8" viewBox="0 0 8 8"><path d="M6 0h2v2H6zM3 3h2v2H3zM6 3h2v2H6zM0 6h2v2H0zM3 6h2v2H3zM6 6h2v2H6z" fill="#bdbdbd" /></svg>
                    </div>
                </div>
            </footer>
        </div>
    )
}
